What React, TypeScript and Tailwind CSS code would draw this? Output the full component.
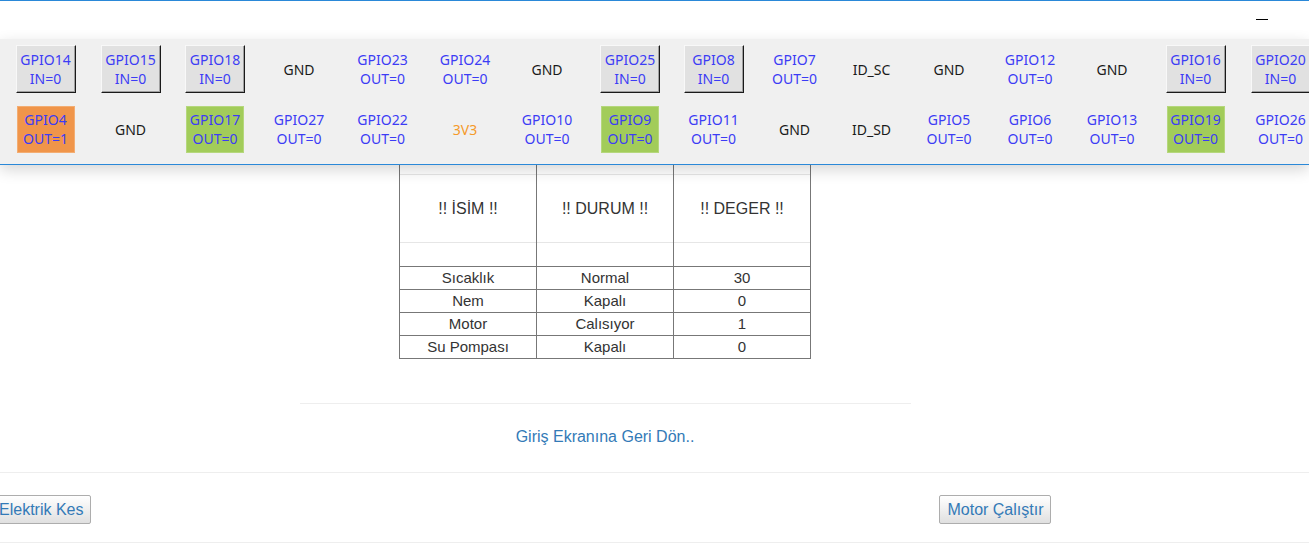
import React from "react";

type Pin = {
  name: string;
  value?: string;
  kind: "btn" | "text" | "orange" | "green" | "power" | "plain";
};

const topRow: Pin[] = [
  { name: "GPIO14", value: "IN=0", kind: "btn" },
  { name: "GPIO15", value: "IN=0", kind: "btn" },
  { name: "GPIO18", value: "IN=0", kind: "btn" },
  { name: "GND", kind: "plain" },
  { name: "GPIO23", value: "OUT=0", kind: "text" },
  { name: "GPIO24", value: "OUT=0", kind: "text" },
  { name: "GND", kind: "plain" },
  { name: "GPIO25", value: "IN=0", kind: "btn" },
  { name: "GPIO8", value: "IN=0", kind: "btn" },
  { name: "GPIO7", value: "OUT=0", kind: "text" },
  { name: "ID_SC", kind: "plain" },
  { name: "GND", kind: "plain" },
  { name: "GPIO12", value: "OUT=0", kind: "text" },
  { name: "GND", kind: "plain" },
  { name: "GPIO16", value: "IN=0", kind: "btn" },
  { name: "GPIO20", value: "IN=0", kind: "btn" },
];

const bottomRow: Pin[] = [
  { name: "GPIO4", value: "OUT=1", kind: "orange" },
  { name: "GND", kind: "plain" },
  { name: "GPIO17", value: "OUT=0", kind: "green" },
  { name: "GPIO27", value: "OUT=0", kind: "text" },
  { name: "GPIO22", value: "OUT=0", kind: "text" },
  { name: "3V3", kind: "power" },
  { name: "GPIO10", value: "OUT=0", kind: "text" },
  { name: "GPIO9", value: "OUT=0", kind: "green" },
  { name: "GPIO11", value: "OUT=0", kind: "text" },
  { name: "GND", kind: "plain" },
  { name: "ID_SD", kind: "plain" },
  { name: "GPIO5", value: "OUT=0", kind: "text" },
  { name: "GPIO6", value: "OUT=0", kind: "text" },
  { name: "GPIO13", value: "OUT=0", kind: "text" },
  { name: "GPIO19", value: "OUT=0", kind: "green" },
  { name: "GPIO26", value: "OUT=0", kind: "text" },
];

const rows = [
  ["Sıcaklık", "Normal", "30"],
  ["Nem", "Kapalı", "0"],
  ["Motor", "Calısıyor", "1"],
  ["Su Pompası", "Kapalı", "0"],
];

const PinCell = ({ pin }: { pin: Pin }) => {
  const label = (
    <>
      <span>{pin.name}</span>
      {pin.value && <span>{pin.value}</span>}
    </>
  );
  let inner;
  if (pin.kind === "btn") {
    inner = (
      <div className="w-[60px] h-[48px] flex flex-col items-center justify-center bg-[#e1e1e1] border-t border-l border-[#f8f8f8] border-r border-b border-r-[#1a1a1a] border-b-[#1a1a1a] shadow-[inset_-1px_-1px_0_#a0a0a0] text-[#3c3cf5]">
        {label}
      </div>
    );
  } else if (pin.kind === "orange") {
    inner = (
      <div className="w-[58px] h-[47px] flex flex-col items-center justify-center bg-[#f0954a] border border-[#f3ad72] text-[#3c3cf5]">
        {label}
      </div>
    );
  } else if (pin.kind === "green") {
    inner = (
      <div className="w-[58px] h-[47px] flex flex-col items-center justify-center bg-[#a2cc5a] border border-[#b5d77c] text-[#3c3cf5]">
        {label}
      </div>
    );
  } else if (pin.kind === "power") {
    inner = <div className="text-[#f59a2a]">{label}</div>;
  } else if (pin.kind === "plain") {
    inner = <div className="text-[#1a1a1a]">{label}</div>;
  } else {
    inner = <div className="flex flex-col items-center text-[#3c3cf5]">{label}</div>;
  }
  return <div className="h-[60px] flex flex-col items-center justify-center text-center">{inner}</div>;
};

const gridCols =
  "grid grid-cols-[85px_85px_84px_84px_83px_82px_82px_84px_83px_79px_75px_80px_82px_82px_85px_85px]";

export default function App() {
  return (
    <div className="relative min-h-screen bg-white font-['Liberation_Sans',Arial,sans-serif] overflow-hidden">
      <header className="h-[39px] border-t border-[#2a88d8] flex justify-end">
        <div className="mt-[18px] mr-[41px] w-[12px] h-px bg-black" />
      </header>

      <div className="absolute left-0 top-[39px] w-full h-[126px] bg-[#f0f0f0] border-b border-[#2a88d8] shadow-[0_5px_14px_rgba(0,0,0,0.16)] z-10 overflow-hidden font-['Noto_Sans',sans-serif] text-[14px] leading-[19px]">
        <div className={`${gridCols} pl-[3px] w-max`}>
          {topRow.map((p, i) => (
            <PinCell key={"t" + i} pin={p} />
          ))}
          {bottomRow.map((p, i) => (
            <PinCell key={"b" + i} pin={p} />
          ))}
        </div>
      </div>

      <main className="w-[1210px] pt-[125px] flex flex-col items-center text-[#333]">
        <table className="border-collapse border border-[#222] text-[15px]">
          <thead>
            <tr>
              {["!! İSİM !!", "!! DURUM !!", "!! DEGER !!"].map((h) => (
                <th key={h} className="w-[137px] p-0 border border-[#777] border-t-[#222] font-normal align-top">
                  <div className="h-[101px] pt-[9px]">
                    <div className="h-[69px] border-t border-b border-[#e6e6e6] flex items-center justify-center text-[16px]">
                      {h}
                    </div>
                  </div>
                </th>
              ))}
            </tr>
          </thead>
          <tbody>
            {rows.map((r) => (
              <tr key={r[0]} className="h-[23px]">
                {r.map((c, i) => (
                  <td key={i} className="p-0 border border-[#777] text-center leading-[22px]">
                    {c}
                  </td>
                ))}
              </tr>
            ))}
          </tbody>
        </table>

        <hr className="w-[611px] mt-[44px] border-t border-[#eee]" />
        <a href="#" className="mt-[23px] text-[16px] leading-[20px] text-[#337ab7]">
          Giriş Ekranına Geri Dön..
        </a>
      </main>

      <hr className="mt-[25px] border-t border-[#eee]" />
      <div className="pt-[22px] pb-[18px] flex items-center">
        <button className="-ml-[9px] h-[29px] px-[7px] text-[16px] text-[#337ab7] bg-gradient-to-b from-white to-[#e0e0e0] border border-[#adadad] rounded-[2px]">
          Elektrik Kes
        </button>
        <button className="ml-[848px] h-[29px] px-[7px] text-[16px] text-[#337ab7] bg-gradient-to-b from-white to-[#e0e0e0] border border-[#adadad] rounded-[2px]">
          Motor Çalıştır
        </button>
      </div>
      <hr className="border-t border-[#eee]" />
    </div>
  );
}
